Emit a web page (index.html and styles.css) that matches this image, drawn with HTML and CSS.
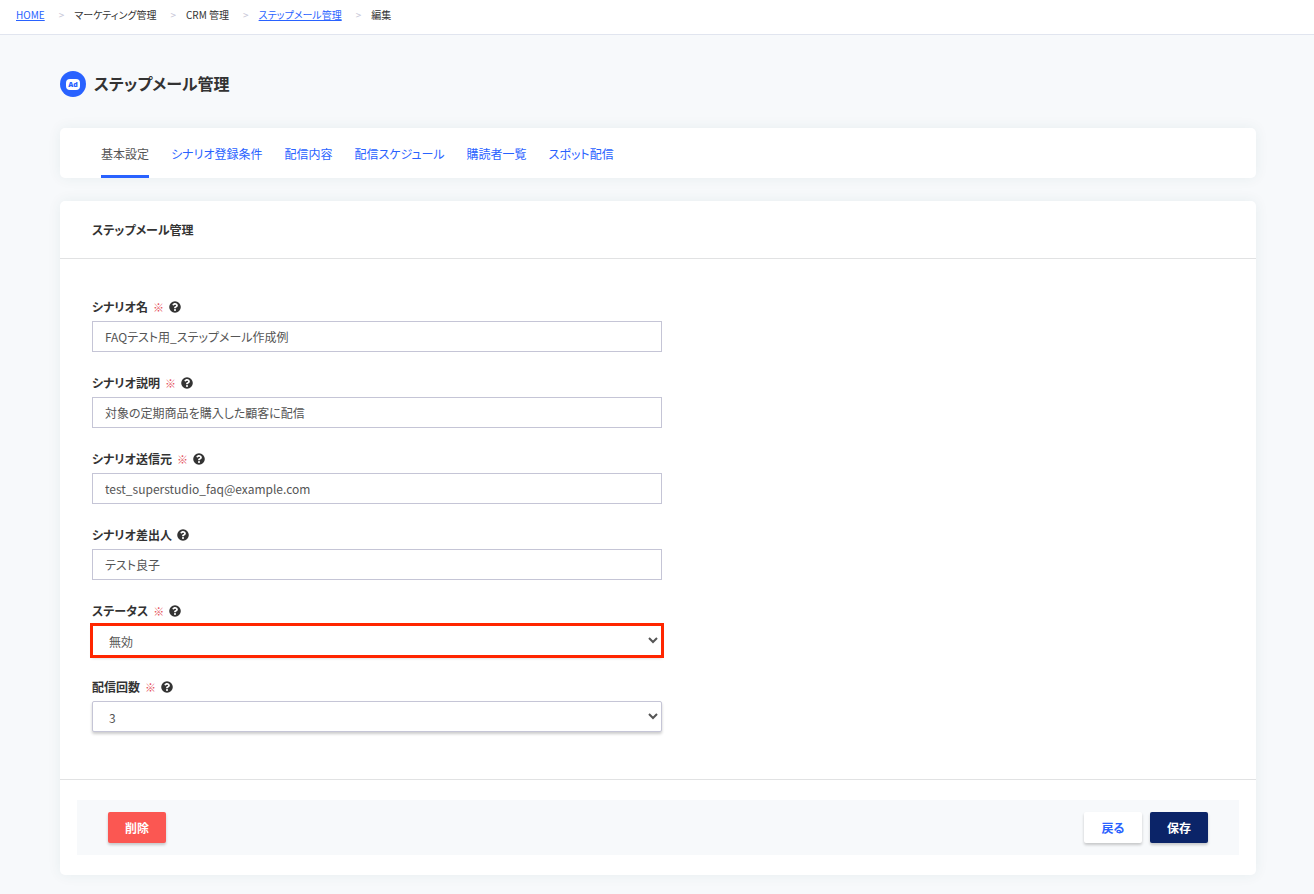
FILE: index.html
```html
<!DOCTYPE html>
<html lang="ja">
<head>
    <meta charset="UTF-8">
    <meta name="viewport" content="width=device-width, initial-scale=1.0">
    <title>ステップメール管理</title>
    <link rel="stylesheet" href="styles.css">
</head>
<body>
    <svg class="sprite" aria-hidden="true">
        <symbol id="icon-help" viewBox="0 0 512 512">
            <path fill="currentColor" fill-rule="evenodd" d="M504 256a248 248 0 1 1-496 0 248 248 0 0 1 496 0zM262.700 90c-54.500 0-89.300 23-116.500 63.800-3.500 5.300-2.400 12.400 2.700 16.300l34.700 26.300c5.200 3.900 12.600 3 16.700-2.100 17.900-22.700 30.100-35.800 57.300-35.800 20.400 0 45.700 13.100 45.700 33 0 15-12.400 22.700-32.500 34C247.100 238.500 216 254.900 216 296v4c0 6.600 5.400 12 12 12h56c6.600 0 12-5.400 12-12v-1.300c0-28.500 83.200-29.600 83.200-106.700 0-58-60.200-102-116.500-102zM256 338a46 46 0 1 0 0 92 46 46 0 0 0 0-92z"/>
        </symbol>
    </svg>

    <nav class="breadcrumb">
        <a href="#">HOME</a>
        <span class="separator">&gt;</span>
        <span>マーケティング管理</span>
        <span class="separator">&gt;</span>
        <span>CRM 管理</span>
        <span class="separator">&gt;</span>
        <a href="#">ステップメール管理</a>
        <span class="separator">&gt;</span>
        <span>編集</span>
    </nav>

    <main class="container">
        <div class="page-header">
            <span class="page-icon"><span class="page-icon-label">Ad</span></span>
            <h1>ステップメール管理</h1>
        </div>

        <nav class="card tabs">
            <a class="tab active" href="#">基本設定</a>
            <a class="tab" href="#">シナリオ登録条件</a>
            <a class="tab" href="#">配信内容</a>
            <a class="tab" href="#">配信スケジュール</a>
            <a class="tab" href="#">購読者一覧</a>
            <a class="tab" href="#">スポット配信</a>
        </nav>

        <form class="card">
            <h2 class="card-title">ステップメール管理</h2>
            <div class="card-body">
                <div class="form-group">
                    <label for="name">シナリオ名 <span class="required">※</span> <svg class="help"><use href="#icon-help"/></svg></label>
                    <input type="text" id="name" value="FAQテスト用_ステップメール作成例">
                </div>
                <div class="form-group">
                    <label for="description">シナリオ説明 <span class="required">※</span> <svg class="help"><use href="#icon-help"/></svg></label>
                    <input type="text" id="description" value="対象の定期商品を購入した顧客に配信">
                </div>
                <div class="form-group">
                    <label for="from">シナリオ送信元 <span class="required">※</span> <svg class="help"><use href="#icon-help"/></svg></label>
                    <input type="text" id="from" value="test_superstudio_faq@example.com">
                </div>
                <div class="form-group">
                    <label for="sender">シナリオ差出人 <svg class="help"><use href="#icon-help"/></svg></label>
                    <input type="text" id="sender" value="テスト良子">
                </div>
                <div class="form-group">
                    <label for="status">ステータス <span class="required">※</span> <svg class="help"><use href="#icon-help"/></svg></label>
                    <select id="status" class="highlight">
                        <option>無効</option>
                        <option>有効</option>
                    </select>
                </div>
                <div class="form-group">
                    <label for="count">配信回数 <span class="required">※</span> <svg class="help"><use href="#icon-help"/></svg></label>
                    <select id="count">
                        <option>1</option>
                        <option>2</option>
                        <option selected>3</option>
                    </select>
                </div>
            </div>
            <div class="card-footer">
                <div class="actions">
                    <button type="button" class="delete">削除</button>
                    <div class="actions-right">
                        <button type="button" class="back">戻る</button>
                        <button type="submit" class="save">保存</button>
                    </div>
                </div>
            </div>
        </form>
    </main>
</body>
</html>
```

FILE: styles.css
```css
* {
    box-sizing: border-box;
}
body {
    margin: 0;
    background: #f7f9fb;
    color: #333;
    font-family: "Noto Sans CJK JP", sans-serif;
    font-size: 12px;
    line-height: 18px;
    font-feature-settings: "palt";
}
a {
    color: #2962ff;
}
input, select, button {
    font: inherit;
    font-feature-settings: inherit;
}
.sprite {
    display: none;
}

/* Breadcrumb */
.breadcrumb {
    display: flex;
    align-items: center;
    padding: 6px 16px 10px;
    background: #fff;
    border-bottom: 1px solid #e1e5ef;
    font-size: 10px;
}
.separator {
    padding: 0 10px 0 14px;
    color: #c5c5d6;
}

.container {
    padding: 36px 58px 19px 60px;
}
.page-header {
    display: flex;
    align-items: center;
    gap: 8px;
    margin-bottom: 31px;
}
.page-icon {
    display: flex;
    align-items: center;
    justify-content: center;
    width: 26px;
    height: 26px;
    border-radius: 50%;
    background: #2962ff;
}
.page-icon-label {
    width: 14px;
    height: 11px;
    border-radius: 4px;
    background: #fff;
    color: #2962ff;
    font-family: "Open Sans", sans-serif;
    font-size: 7px;
    font-weight: 800;
    line-height: 11px;
    text-align: center;
}
h1 {
    margin: 0;
    padding-bottom: 2px;
    font-size: 16px;
    font-weight: bold;
    line-height: 24px;
}

/* Cards */
.card {
    border-radius: 5px;
    background: #fff;
    box-shadow: 0 0 14px rgba(8, 80, 80, 0.07);
}
.tabs {
    display: flex;
    gap: 22px;
    height: 50px;
    margin-bottom: 23px;
    padding: 0 41px;
}
.tab {
    padding-top: 17px;
    text-decoration: none;
}
.tab.active {
    border-bottom: 3px solid #2962ff;
    color: #555;
}
.card-title {
    margin: 0;
    padding: 20px 32px 19px;
    border-bottom: 1px solid #e1e2e3;
    font-size: 12px;
    font-weight: bold;
}
.card-body {
    padding: 39px 32px 47px;
}

/* Form */
.form-group {
    max-width: 570px;
    margin-bottom: 22px;
}
.form-group:last-child {
    margin-bottom: 0;
}
label {
    display: flex;
    align-items: center;
    gap: 5px;
    margin-bottom: 5px;
    font-weight: bold;
}
.required {
    color: #e5505c;
    font-size: 11px;
    font-weight: normal;
}
.help {
    width: 12px;
    height: 12px;
}
input, select {
    display: block;
    width: 100%;
    height: 31px;
    padding: 0 12px;
    border: 1px solid #c5c5d6;
    background: #fff;
    color: #555;
}
select {
    padding: 1px 0 0 12px;
    border-radius: 2px;
    box-shadow: 0 2px 3px rgba(0, 0, 0, 0.2);
}
.highlight {
    border-radius: 0;
    outline: 3px solid #ff2600;
    outline-offset: -1px;
}

/* Footer */
.card-footer {
    padding: 20px 17px;
    border-top: 1px solid #e1e2e3;
}
.actions {
    display: flex;
    justify-content: space-between;
    padding: 12px 31px;
    background: #f7f9fb;
}
.actions-right {
    display: flex;
    gap: 8px;
}
button {
    min-width: 58px;
    height: 31px;
    padding: 0 17px;
    border: none;
    border-radius: 2px;
    box-shadow: 0 2px 3px rgba(0, 0, 0, 0.2);
    color: #fff;
    font-weight: bold;
    cursor: pointer;
}
.delete {
    background: #fb5752;
}
.back {
    background: #fff;
    color: #2962ff;
}
.save {
    background: #0b2468;
}
```
